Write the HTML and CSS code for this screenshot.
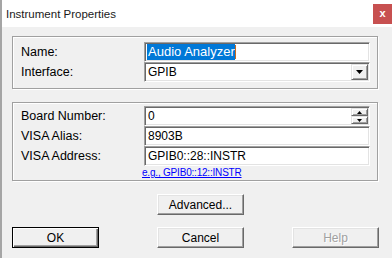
FILE: index.html
```html
<!DOCTYPE html>
<html>
<head>
<meta charset="utf-8">
<link rel="stylesheet" href="styles.css">
</head>
<body>
<div class="window">
  <div class="titlebar">
    <span class="title">Instrument Properties</span>
    <span class="close">x</span>
  </div>
  <div class="body">
    <div class="group g1">
      <div class="row">
        <span class="label">Name:</span>
        <div class="field edit name-field"><span class="sel">Audio Analyzer</span><span class="caret"></span></div>
      </div>
      <div class="row">
        <span class="label">Interface:</span>
        <div class="field combo"><span class="val">GPIB</span>
          <span class="dropbtn"><svg width="7" height="4" viewBox="0 0 7 4"><path d="M0 0h7L3.5 4z" fill="#000"/></svg></span>
        </div>
      </div>
    </div>
    <div class="group g2">
      <div class="row">
        <span class="label">Board Number:</span>
        <div class="field spin"><span class="val">0</span>
          <span class="spinbtns">
            <span class="spinbtn"><svg width="5" height="3" viewBox="0 0 5 3"><path d="M2.5 0L5 3H0z" fill="#000"/></svg></span>
            <span class="spinbtn"><svg width="5" height="3" viewBox="0 0 5 3"><path d="M0 0h5L2.5 3z" fill="#000"/></svg></span>
          </span>
        </div>
      </div>
      <div class="row">
        <span class="label">VISA Alias:</span>
        <div class="field edit"><span class="val">8903B</span></div>
      </div>
      <div class="row">
        <span class="label">VISA Address:</span>
        <div class="field edit"><span class="val">GPIB0::28::INSTR</span></div>
      </div>
      <div class="linkrow"><a class="example" href="#">e.g., GPIB0::12::INSTR</a></div>
    </div>
    <div class="adv-row"><button class="btn adv">Advanced...</button></div>
    <div class="btn-row">
      <button class="btn default">OK</button>
      <button class="btn cancel">Cancel</button>
      <button class="btn help" disabled>Help</button>
    </div>
  </div>
</div>
</body>
</html>
```

FILE: styles.css
```css
* { box-sizing: border-box; }
html, body { margin: 0; padding: 0; background: #f0f0f0; }
body { font-family: "Liberation Sans", Arial, sans-serif; color: #000; }

.window {
  width: 392px;
  height: 258px;
  background: #f0f0f0;
  border-left: 2px solid #a5a5a5;
  display: flex;
  flex-direction: column;
  overflow: hidden;
}

.titlebar {
  height: 27px;
  flex: none;
  background: #fff;
  display: flex;
  align-items: flex-start;
  padding-left: 4px;
}
.title {
  font-size: 11.5px;
  line-height: 13px;
  margin-top: 8px;
  color: #1a1a1a;
}
.close {
  margin-left: auto;
  margin-top: 4px;
  width: 19px;
  height: 20px;
  background: #c75050;
  color: #fff;
  font-weight: bold;
  font-size: 11px;
  line-height: 19px;
  text-align: center;
}

.body {
  padding-left: 10px;
  display: flex;
  flex-direction: column;
}

.group {
  width: 366px;
  border: 1px solid #a0a0a0;
  box-shadow: inset 1px 1px 0 #fff, 1px 1px 0 #fff;
  padding: 0 6px 0 8px;
}
.g1 { margin-top: 9px; padding-top: 5px; padding-bottom: 6px; }
.g2 { margin-top: 13px; padding-top: 3px; }

.row {
  display: flex;
  height: 20px;
  align-items: center;
}
.label {
  width: 123px;
  font-size: 12.5px;
  line-height: 14px;
  color: #000;
}

.field {
  width: 226px;
  height: 20px;
  border: 1px solid;
  border-color: #a0a0a0 #fff #fff #a0a0a0;
  box-shadow: inset 1px 1px 0 #696969, inset -1px -1px 0 #e3e3e3;
  background: #fff;
  padding: 1px;
  display: flex;
  align-items: center;
  font-size: 12px;
  line-height: 14px;
}
.field .val { padding-left: 2px; }

.name-field { font-size: 13px; }
.sel {
  background: #0078d7;
  color: #fff;
  height: 16px;
  line-height: 16px;
  padding: 0 0 0 1px;
  margin-left: 1px;
}
.caret {
  width: 1px;
  height: 14px;
  background: #c8691c;
}

.dropbtn {
  margin-left: auto;
  width: 17px;
  height: 16px;
  background: #f0f0f0;
  border: 1px solid;
  border-color: #e3e3e3 #696969 #696969 #e3e3e3;
  box-shadow: inset 1px 1px 0 #fff, inset -1px -1px 0 #a0a0a0;
  display: flex;
  align-items: center;
  justify-content: center;
}
.dropbtn svg { display: block; }

.spinbtns {
  margin-left: auto;
  width: 17px;
  height: 16px;
  display: flex;
  flex-direction: column;
}
.spinbtn {
  height: 8px;
  background: #f0f0f0;
  border: 1px solid;
  border-color: #e3e3e3 #696969 #696969 #e3e3e3;
  box-shadow: inset 1px 1px 0 #fff, inset -1px -1px 0 #a0a0a0;
  display: flex;
  align-items: center;
  justify-content: center;
}
.spinbtn svg { display: block; }

.linkrow {
  height: 14px;
  padding-left: 121px;
  display: flex;
  align-items: center;
}
.example {
  font-size: 10px;
  line-height: 12px;
  color: #0000ff;
  text-decoration: underline;
  letter-spacing: -0.2px;
}

.btn {
  width: 87px;
  height: 21px;
  padding: 0;
  margin: 0;
  font-family: "Liberation Sans", Arial, sans-serif;
  font-size: 12px;
  color: #000;
  background: #f0f0f0;
  border: 1px solid;
  border-color: #fff #696969 #696969 #fff;
  box-shadow: inset -1px -1px 0 #a0a0a0, inset 1px 1px 0 #e3e3e3;
  border-radius: 0;
}
.adv-row { display: flex; margin-top: 13px; }
.adv { margin-left: 145px; }
.btn-row { display: flex; margin-top: 12px; }
.default {
  border: 1px solid #000;
  box-shadow: inset 1px 1px 0 #fff, inset -1px -1px 0 #696969, inset -2px -2px 0 #a0a0a0;
}
.cancel { margin-left: 58px; }
.help {
  margin-left: 48px;
  color: #a0a0a0;
  text-shadow: 1px 1px 0 #fff;
}
```
